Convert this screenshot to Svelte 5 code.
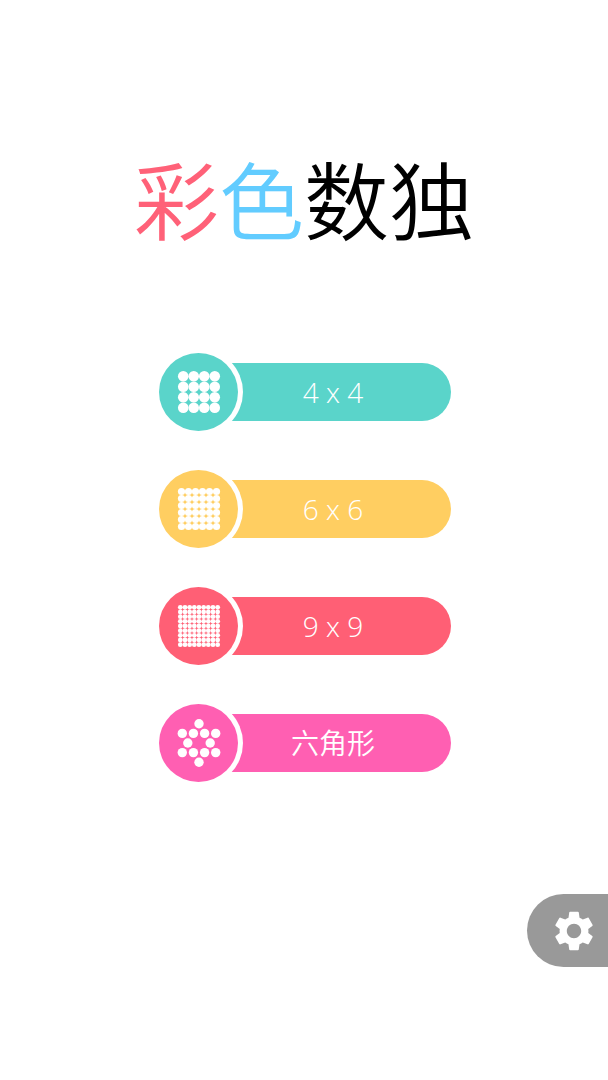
<script lang="ts">
	type Dot = { x: number; y: number };
	type Mode = { id: string; label: string; color: string; dots: Dot[]; r: number };

	const ICON_SIZE = 42;

	// Square board of n x n dots that slightly touch each other
	function board(n: number): Dot[] {
		const step = ICON_SIZE / n;
		return Array.from({ length: n * n }, (_, i) => ({
			x: (i % n) * step + step / 2,
			y: Math.floor(i / n) * step + step / 2
		}));
	}

	// Six pointed star
	const star: Dot[] = [
		{ x: 21, y: 1.7 },
		...[4.3, 15.4, 26.6, 37.7].map((x) => ({ x, y: 11.4 })),
		{ x: 9.8, y: 21 },
		{ x: 32.2, y: 21 },
		...[4.3, 15.4, 26.6, 37.7].map((x) => ({ x, y: 30.6 })),
		{ x: 21, y: 40.3 }
	];

	const modes: Mode[] = [
		{ id: '4', label: '4 x 4', color: '#5ad4ca', dots: board(4), r: 5.3 },
		{ id: '6', label: '6 x 6', color: '#ffce61', dots: board(6), r: 3.6 },
		{ id: '9', label: '9 x 9', color: '#ff5f75', dots: board(9), r: 2.4 },
		{ id: 'hex', label: '六角形', color: '#ff5fb2', dots: star, r: 4.7 }
	];

	let selected = $state('');
</script>

<svelte:head>
	<title>彩色数独</title>
</svelte:head>

<main class="home">
	<h1 class="title"><span class="red">彩</span><span class="blue">色</span>数独</h1>

	<nav class="menu">
		{#each modes as mode (mode.id)}
			<button
				type="button"
				class="mode"
				style="--color: {mode.color}"
				onclick={() => (selected = mode.id)}
			>
				<span class="badge">
					<svg viewBox="0 0 42 42" aria-hidden="true">
						{#each mode.dots as dot}
							<circle cx={dot.x} cy={dot.y} r={mode.r} />
						{/each}
					</svg>
				</span>
				<span class="label" class:cjk={mode.id === 'hex'}>{mode.label}</span>
			</button>
		{/each}
	</nav>

	<button type="button" class="settings" aria-label="设置">
		<svg viewBox="0 0 24 24" aria-hidden="true">
			<path
				d="M19.14 12.94c.04-.3.06-.61.06-.94 0-.32-.02-.64-.07-.94l2.03-1.58c.18-.14.23-.41.12-.61l-1.92-3.32c-.12-.22-.37-.29-.59-.22l-2.39.96c-.5-.38-1.03-.7-1.62-.94l-.36-2.54c-.04-.24-.24-.41-.48-.41h-3.84c-.24 0-.43.17-.47.41l-.36 2.54c-.59.24-1.13.57-1.62.94l-2.39-.96c-.22-.08-.47 0-.59.22L2.74 8.87c-.12.21-.08.47.12.61l2.03 1.58c-.05.3-.09.63-.09.94s.02.64.07.94l-2.03 1.58c-.18.14-.23.41-.12.61l1.92 3.32c.12.22.37.29.59.22l2.39-.96c.5.38 1.03.7 1.62.94l.36 2.54c.05.24.24.41.48.41h3.84c.24 0 .44-.17.47-.41l.36-2.54c.59-.24 1.13-.56 1.62-.94l2.39.96c.22.08.47 0 .59-.22l1.92-3.32c.12-.22.07-.47-.12-.61l-2.01-1.58zM12 15.6c-1.98 0-3.6-1.62-3.6-3.6s1.62-3.6 3.6-3.6 3.6 1.62 3.6 3.6-1.62 3.6-3.6 3.6z"
			/>
		</svg>
	</button>
</main>

<style>
	:global(body) {
		background: #fff;
	}

	.home {
		display: flex;
		flex-direction: column;
		align-items: center;
		box-sizing: border-box;
		min-height: 100vh;
		padding: 147px 0 113px;
		font-family: 'Open Sans', 'Noto Sans CJK SC', sans-serif;
	}

	.title {
		margin: 0 0 106px;
		font-family: 'Noto Sans CJK SC', sans-serif;
		font-size: 85px;
		font-weight: 350;
		line-height: 100px;
		color: #000;
	}

	.red {
		color: #ff6178;
	}

	.blue {
		color: #62ccff;
	}

	.menu {
		display: flex;
		flex-direction: column;
		gap: 39px;
		padding-left: 2px;
	}

	.mode {
		display: flex;
		align-items: center;
		padding: 0;
		border: none;
		background: none;
		font-family: inherit;
		cursor: pointer;
	}

	.badge {
		z-index: 1;
		display: flex;
		align-items: center;
		justify-content: center;
		width: 79px;
		height: 78px;
		border-radius: 50%;
		background: var(--color);
		box-shadow: 0 0 0 5px #fff;
	}

	.badge svg {
		width: 42px;
		height: 42px;
		overflow: visible;
		fill: #fff;
	}

	.label {
		width: 236px;
		margin-left: -23px;
		border-radius: 0 29px 29px 0;
		background: var(--color);
		color: #fff;
		font-size: 28px;
		font-weight: 300;
		line-height: 58px;
		text-align: center;
	}

	.label.cjk {
		font-weight: 350;
	}

	.settings {
		display: flex;
		align-items: center;
		align-self: flex-end;
		box-sizing: border-box;
		width: 81px;
		height: 73px;
		margin-top: auto;
		padding: 0 0 0 23px;
		border: none;
		border-radius: 37px 0 0 37px;
		background: #999;
		cursor: pointer;
	}

	.settings svg {
		flex: none;
		width: 48px;
		height: 48px;
		fill: #fff;
	}
</style>
